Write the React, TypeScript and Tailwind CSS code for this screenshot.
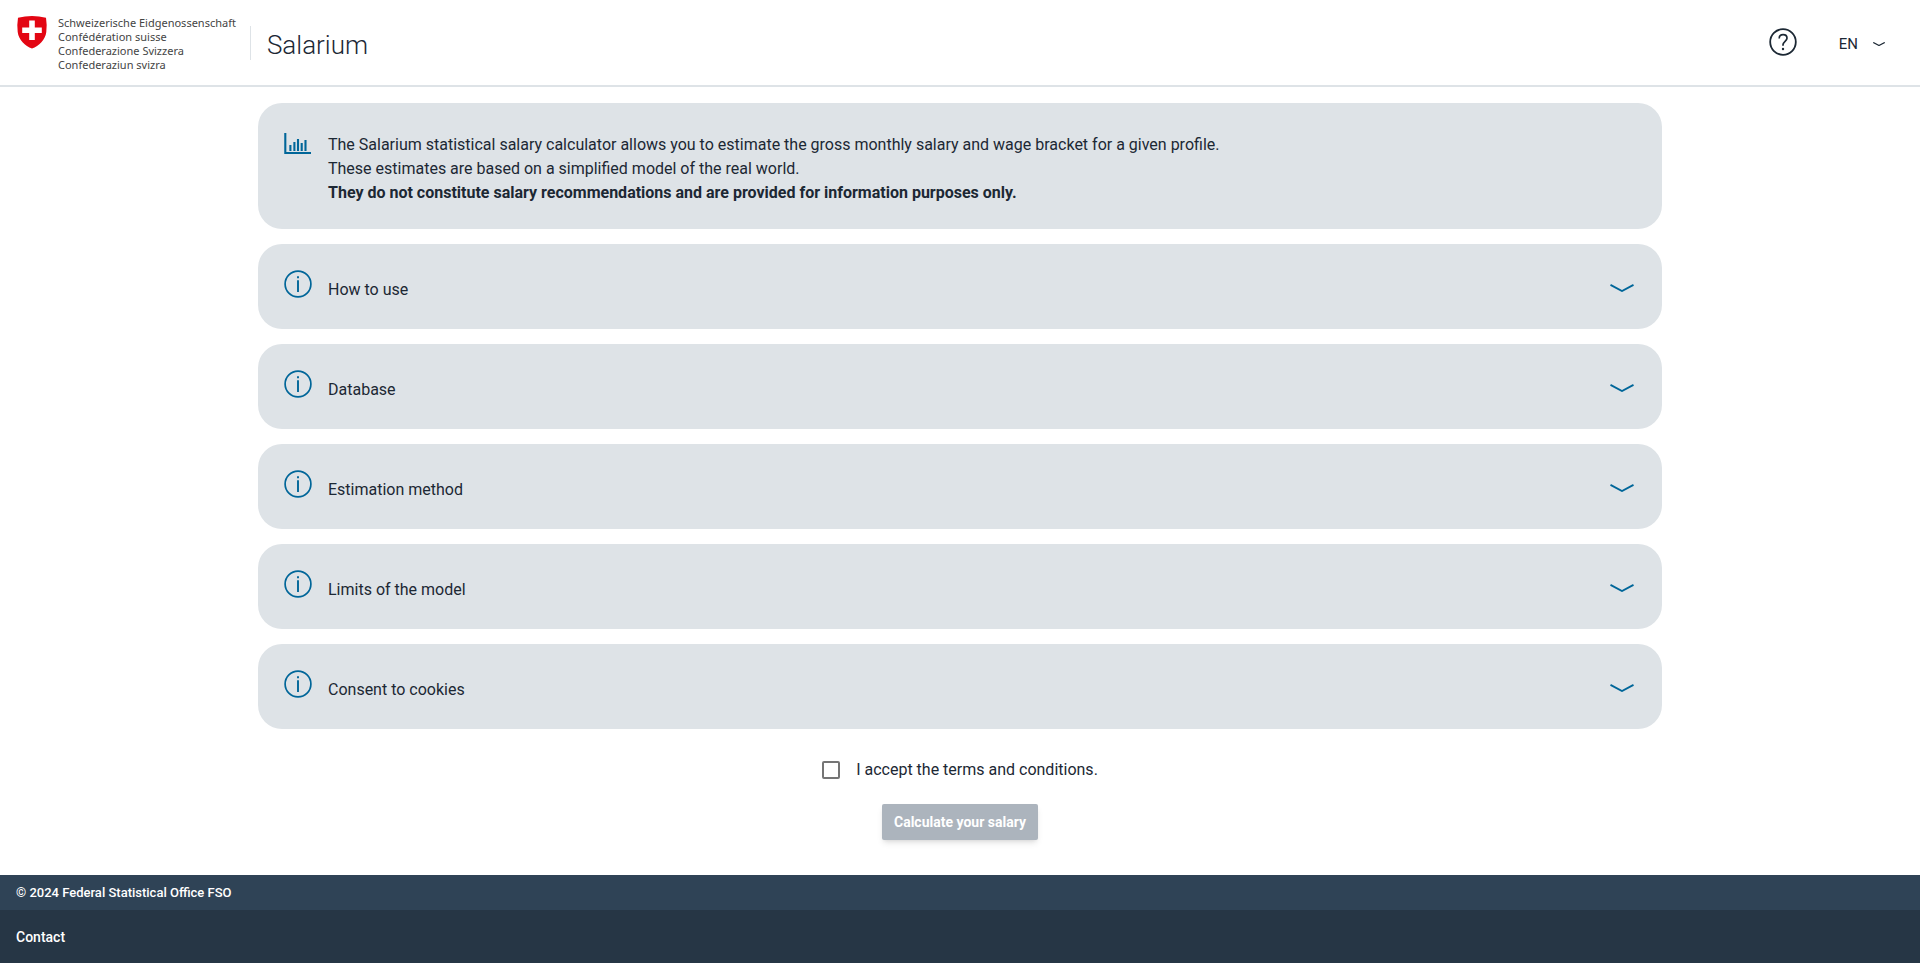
import { useState } from "react";

const topics = [
  "How to use",
  "Database",
  "Estimation method",
  "Limits of the model",
  "Consent to cookies",
];

function SwissShield() {
  return (
    <svg className="h-[34px] w-8" viewBox="-1 0 32 34" aria-hidden="true">
      <path
        d="M1 1.7Q8 0 15 0T29 1.7Q30.200 9 29.300 16C28.300 24 22 30 15 32.600C8 30 1.700 24 .7 16Q-.2 9 1 1.700Z"
        fill="#e30613"
      />
      <path d="M12.200 4.500h5.600v7h7v5.600h-7v7h-5.600v-7h-7v-5.600h7z" fill="#fff" />
    </svg>
  );
}

function HelpIcon() {
  return (
    <svg className="size-7" viewBox="0 0 28 28" fill="none" stroke="currentColor" aria-hidden="true">
      <circle cx="14" cy="14" r="12.800" strokeWidth="1.800" />
      <path
        d="M10.200 10.400C10.200 8 11.800 6.700 14.100 6.700S18 8.100 18 10.200C18 13 14 13.700 14 16.800V17.800"
        strokeWidth="1.700"
      />
      <circle cx="14" cy="21" r="1.200" fill="currentColor" stroke="none" />
    </svg>
  );
}

function InfoIcon() {
  return (
    <svg className="size-7" viewBox="0 0 28 28" fill="none" stroke="currentColor" aria-hidden="true">
      <circle cx="14" cy="14" r="12.900" strokeWidth="1.700" />
      <path d="M14 10.300V22M14 6.300V8.300" strokeWidth="1.900" />
    </svg>
  );
}

function ChartIcon() {
  return (
    <svg className="h-[22px] w-7" viewBox="0 0 28 22" fill="none" stroke="currentColor" aria-hidden="true">
      <path d="M1.300 0V20H27" strokeWidth="2.100" />
      <path d="M6.400 18V12M10.400 18V9M14 18V6M17.700 18V10M21.500 18V7" strokeWidth="2.100" />
    </svg>
  );
}

function Chevron({ className, strokeWidth = 1.9 }: { className: string; strokeWidth?: number }) {
  return (
    <svg className={className} viewBox="0 0 24 8" fill="none" stroke="currentColor" aria-hidden="true">
      <path d="M.5 .9L12 7L23.500 .9" strokeWidth={strokeWidth} />
    </svg>
  );
}

function Topic({ title }: { title: string }) {
  return (
    <button
      type="button"
      aria-expanded="false"
      className="flex w-full items-start rounded-3xl bg-[#dee3e7] px-[26px] pt-[26px] pb-[27px] text-left"
    >
      <span className="text-[#006699]">
        <InfoIcon />
      </span>
      <span className="mt-2 ml-4 grow leading-6">{title}</span>
      <span className="mt-3.5 mr-0.5 text-[#006699]">
        <Chevron className="h-2 w-6" />
      </span>
    </button>
  );
}

export default function App() {
  const [accepted, setAccepted] = useState(false);

  return (
    <div className="flex min-h-screen flex-col bg-white font-['Roboto',sans-serif] text-base text-[#1c2834]">
      <header className="flex items-start justify-between border-b-2 border-[#dee3e7] px-4 pt-4 pb-[13px]">
        <div className="flex">
          <SwissShield />
          <div className="ml-2.5 font-['Noto_Sans',sans-serif] text-[11px] leading-[14px] text-[#444444]">
            <p>Schweizerische Eidgenossenschaft</p>
            <p>Confédération suisse</p>
            <p>Confederazione Svizzera</p>
            <p>Confederaziun svizra</p>
          </div>
          <h1 className="mt-2.5 ml-3.5 h-[34px] border-l border-[#dee3e7] pl-4 text-[26px] leading-[38px] font-light">
            Salarium
          </h1>
        </div>
        <div className="mt-3 mr-[18px] flex items-start">
          <button type="button" aria-label="Help">
            <HelpIcon />
          </button>
          <button type="button" aria-label="Language" className="mt-1 ml-[42px] flex items-center text-[15px] leading-6">
            EN
            <Chevron className="ml-3.5 h-1 w-3.5" strokeWidth={2.4} />
          </button>
        </div>
      </header>

      <main className="mx-auto flex w-full max-w-[1404px] grow flex-col gap-[15px] pt-4">
        <section className="flex items-start rounded-3xl bg-[#dee3e7] px-[26px] pt-[30px] pb-6">
          <span className="text-[#006699]">
            <ChartIcon />
          </span>
          <div className="ml-4 leading-6">
            <p>
              The Salarium statistical salary calculator allows you to estimate the gross monthly salary and wage
              bracket for a given profile.
            </p>
            <p>These estimates are based on a simplified model of the real world.</p>
            <p className="font-bold">
              They do not constitute salary recommendations and are provided for information purposes only.
            </p>
          </div>
        </section>

        {topics.map((title) => (
          <Topic key={title} title={title} />
        ))}

        <div className="mt-3.5 flex flex-col items-center">
          <label className="flex items-center gap-4 leading-6">
            <input
              type="checkbox"
              checked={accepted}
              onChange={(event) => setAccepted(event.target.checked)}
              className="size-[18px] appearance-none rounded-xs border-2 border-[#757575] checked:bg-[#006699]"
            />
            I accept the terms and conditions.
          </label>
          <button
            type="button"
            disabled={!accepted}
            className="mt-[22px] h-9 min-w-[156px] rounded-xs bg-[#006699] px-2 text-sm font-bold text-white shadow-md disabled:bg-[#acb4bd]"
          >
            Calculate your salary
          </button>
        </div>
      </main>

      <footer className="text-[13px] font-medium text-white">
        <p className="bg-[#2f4356] px-4 pt-2 pb-[7px] leading-5">© 2024 Federal Statistical Office FSO</p>
        <div className="bg-[#263645] px-4 pt-[17px] pb-4 text-sm leading-5">
          <a href="#contact">Contact</a>
        </div>
      </footer>
    </div>
  );
}
